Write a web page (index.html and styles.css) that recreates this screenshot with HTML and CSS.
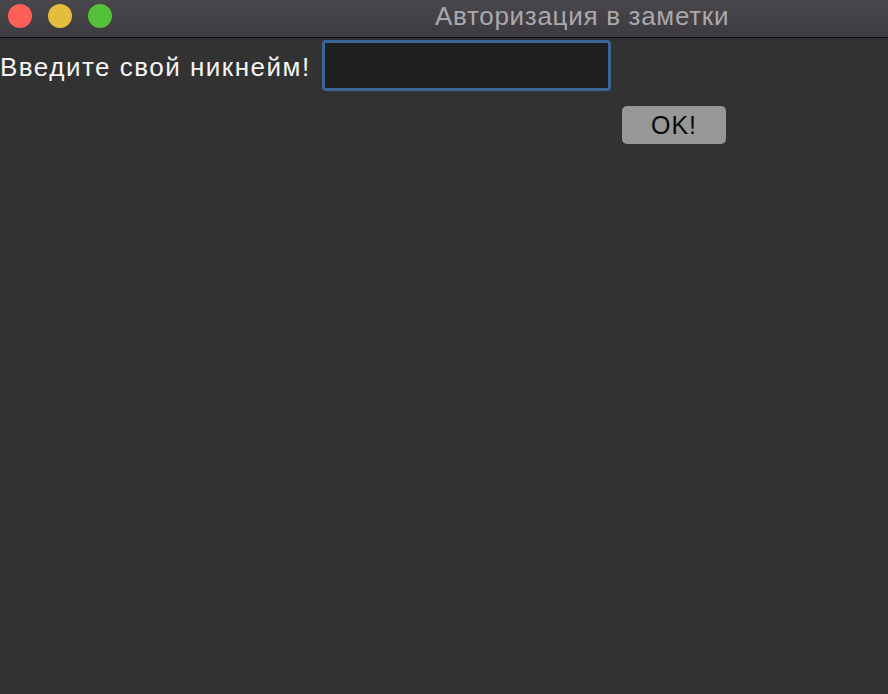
FILE: index.html
```html
<!DOCTYPE html>
<html lang="ru">
<head>
<meta charset="utf-8">
<link rel="stylesheet" href="styles.css">
</head>
<body>
<div class="window">
  <div class="titlebar">
    <div class="lights">
      <span class="light red"></span>
      <span class="light yellow"></span>
      <span class="light green"></span>
    </div>
    <div class="title">Авторизация в заметки</div>
  </div>
  <div class="content">
    <div class="row">
      <label class="label" for="nick">Введите свой никнейм!</label>
      <input class="field" id="nick" type="text">
    </div>
    <div class="actions">
      <button class="ok">OK!</button>
    </div>
  </div>
</div>
</body>
</html>
```
FILE: styles.css
```css
html, body {
  margin: 0;
  padding: 0;
  background: #323232;
  height: 100%;
}
.window {
  font-family: "Liberation Sans", Arial, sans-serif;
  height: 100%;
}
.titlebar {
  height: 37px;
  background: linear-gradient(#49474c, #3d3b40);
  border-bottom: 1px solid #0f0f10;
  display: flex;
  align-items: center;
}
.lights {
  display: flex;
  gap: 16px;
  padding-left: 8px;
  width: 427px;
  margin-top: -6px;
}
.light {
  width: 24px;
  height: 24px;
  border-radius: 50%;
  display: block;
}
.red { background: #fe5f57; }
.yellow { background: #e5bd3c; }
.green { background: #55c13a; }
.title {
  color: #aaa8ad;
  font-size: 26px;
  letter-spacing: 0.7px;
  margin-top: -4px;
  white-space: nowrap;
}
.content {
  padding-top: 2px;
}
.row {
  display: flex;
  align-items: center;
  gap: 11px;
}
.label {
  color: #f4f4f4;
  font-size: 26px;
  letter-spacing: 1.5px;
  width: 311px;
  white-space: nowrap;
  padding-top: 4px;
}
.field {
  width: 289px;
  height: 51px;
  box-sizing: border-box;
  border: 3px solid #3b6595;
  border-radius: 4px;
  background: #1f1f1f;
  margin: 0;
  outline: none;
}
.actions {
  padding-left: 622px;
  padding-top: 15px;
}
.ok {
  width: 104px;
  height: 38px;
  background: #979797;
  border: none;
  border-radius: 5px;
  font-family: "Liberation Sans", Arial, sans-serif;
  font-size: 25px;
  color: #0a0a0a;
  padding: 0;
  letter-spacing: 1px;
}
```
